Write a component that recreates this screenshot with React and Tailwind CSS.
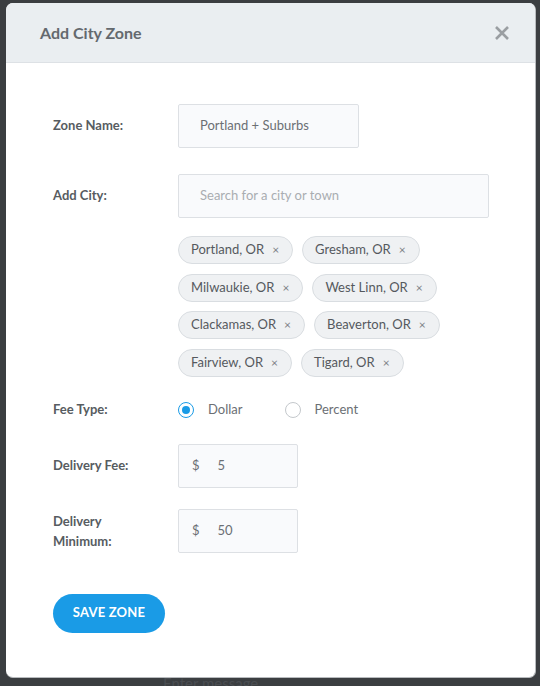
import React from "react";

const cities = [
  ["Portland, OR", "Gresham, OR"],
  ["Milwaukie, OR", "West Linn, OR"],
  ["Clackamas, OR", "Beaverton, OR"],
  ["Fairview, OR", "Tigard, OR"],
];

function Chip({ label }) {
  return (
    <div className="flex h-[28px] items-center rounded-full border border-[#d9dde1] bg-[#eff1f3] pl-[12px] pr-[13px] text-[13px] text-[#55595e]">
      <span>{label}</span>
      <span className="ml-[8px] text-[12px] text-[#7d8186]">×</span>
    </div>
  );
}

function Radio({ checked, label }) {
  return (
    <div className="flex items-center">
      <span
        className={
          checked
            ? "flex h-[16px] w-[16px] items-center justify-center rounded-full border-[1.5px] border-[#1a9be6] bg-white"
            : "flex h-[16px] w-[16px] items-center justify-center rounded-full border border-[#c4c8cc] bg-white"
        }
      >
        {checked && <span className="h-[8px] w-[8px] rounded-full bg-[#1a9be6]" />}
      </span>
      <span className="ml-[14px] text-[13px] text-[#6b6f74]">{label}</span>
    </div>
  );
}

function Label({ children, className = "" }) {
  return (
    <div className={"w-[125px] shrink-0 text-[13px] font-bold text-[#575c61] " + className}>
      {children}
    </div>
  );
}

function MoneyInput({ value }) {
  return (
    <div className="flex h-[44px] w-[120px] items-center rounded-[2px] border border-[#dde0e4] bg-[#f9fafc] pl-[13px] text-[13px] text-[#6b6f74]">
      <span>$</span>
      <span className="ml-[18px]">{value}</span>
    </div>
  );
}

export default function App() {
  return (
    <div
      className="relative h-[686px] w-[540px] overflow-hidden bg-[#3b3e41] pl-[6px] pt-[3px]"
      style={{ fontFamily: "Lato, 'Open Sans', sans-serif" }}
    >
      <div className="flex h-[675px] w-[530px] flex-col overflow-hidden rounded-[7px] border-r border-b border-[#b8bbbe] bg-white">
        <div className="flex h-[60px] shrink-0 items-center justify-between border-b border-[#dde1e5] bg-[#eaeef1] pl-[34px] pr-[24px]">
          <div className="text-[16px] font-bold text-[#64696e]">Add City Zone</div>
          <svg width="16" height="16" viewBox="0 0 16 16" className="mr-[1px]">
            <path d="M2 2 L14 14 M14 2 L2 14" stroke="#9a9ea2" strokeWidth="2.6" strokeLinecap="butt" />
          </svg>
        </div>

        <div className="flex flex-col pl-[47px] pt-[41px]">
          <div className="flex items-center">
            <Label>Zone Name:</Label>
            <div className="flex h-[44px] w-[181px] items-center rounded-[2px] border border-[#dde0e4] bg-[#f9fafc] pl-[21px] text-[13px] text-[#6b6f74]">
              Portland + Suburbs
            </div>
          </div>

          <div className="mt-[26px] flex items-center">
            <Label>Add City:</Label>
            <div className="flex h-[44px] w-[311px] items-center rounded-[2px] border border-[#dde0e4] bg-[#f9fafc] pl-[21px] text-[13px] text-[#a9adb1]">
              Search for a city or town
            </div>
          </div>

          <div className="ml-[125px] mt-[18px] flex flex-col gap-[9.5px]">
            {cities.map((row, i) => (
              <div key={i} className="flex gap-[9px]">
                {row.map((c) => (
                  <Chip key={c} label={c} />
                ))}
              </div>
            ))}
          </div>

          <div className="mt-[25px] flex h-[17px] items-center">
            <Label>Fee Type:</Label>
            <Radio checked label="Dollar" />
            <div className="ml-[42px]">
              <Radio label="Percent" />
            </div>
          </div>

          <div className="mt-[25px] flex items-center">
            <Label>Delivery Fee:</Label>
            <MoneyInput value="5" />
          </div>

          <div className="mt-[21px] flex items-center">
            <Label className="leading-[20px]">
              Delivery
              <br />
              Minimum:
            </Label>
            <MoneyInput value="50" />
          </div>

          <button className="mt-[41px] h-[39px] w-[112px] rounded-full bg-[#1a9be6] text-[13px] font-bold uppercase tracking-[0.2px] text-white">
            Save Zone
          </button>
        </div>
      </div>
      <div className="-mt-[6px] ml-[157px] text-[15px] text-[#4a4d51]">Enter message</div>
    </div>
  );
}
